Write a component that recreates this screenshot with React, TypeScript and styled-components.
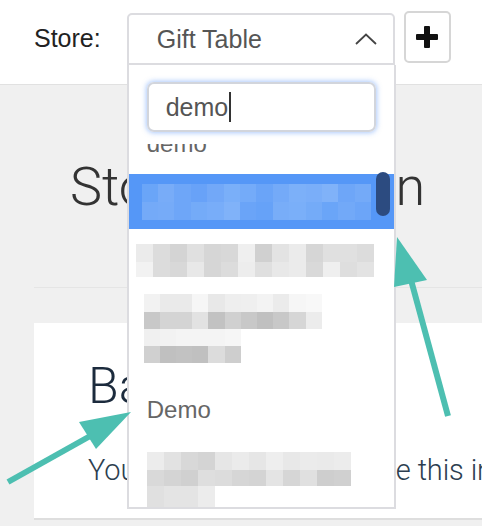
import React from "react";
import styled, { createGlobalStyle } from "styled-components";

const GlobalStyle = createGlobalStyle`
  body {
    margin: 0;
    font-family: "Liberation Sans", Arial, sans-serif;
  }
`;

const Page = styled.div`
  position: relative;
  width: 482px;
  height: 526px;
  overflow: hidden;
  background: #f0f0f0;
`;

const Header = styled.header`
  box-sizing: border-box;
  height: 85px;
  display: flex;
  align-items: flex-start;
  padding: 13px 0 0 34px;
  background: #fff;
  border-bottom: 1px solid #e1e1e1;
  position: relative;
  z-index: 2;
`;

const Label = styled.span`
  font-size: 25px;
  line-height: 50px;
  color: #222;
  margin-right: 26px;
`;

const SelectWrap = styled.div`
  position: relative;
  width: 268px;
  margin-right: 9px;
`;

const SelectBox = styled.div`
  box-sizing: border-box;
  height: 52px;
  display: flex;
  align-items: center;
  justify-content: space-between;
  padding: 0 16px 0 28px;
  border: 2px solid #dcdce0;
  border-radius: 5px 5px 0 0;
  font-size: 25px;
  color: #555;
`;

const AddButton = styled.button`
  box-sizing: border-box;
  margin-top: -2px;
  width: 47px;
  height: 52px;
  display: flex;
  align-items: center;
  justify-content: center;
  padding: 0;
  border: 2px solid #d6d6d6;
  border-radius: 5px;
  background: #fff;
`;

const Dropdown = styled.div`
  box-sizing: border-box;
  position: absolute;
  top: 52px;
  left: 0;
  width: 269px;
  height: 444px;
  display: flex;
  flex-direction: column;
  border: 2px solid #dcdce0;
  border-top: none;
  background: #fff;
`;

const SearchArea = styled.div`
  padding: 17px 18px 12px 18px;
`;

const SearchInput = styled.div`
  box-sizing: border-box;
  height: 50px;
  display: flex;
  align-items: center;
  padding-left: 17px;
  border: 2px solid #d2d5dc;
  border-radius: 7px;
  box-shadow: 0 0 5px 1px rgba(90, 150, 250, 0.5);
  font-size: 25px;
  color: #555;
`;

const Caret = styled.span`
  width: 2px;
  height: 30px;
  margin-left: 1px;
  background: #333;
`;

const Viewport = styled.div`
  flex: 1;
  overflow: hidden;
`;

const List = styled.div<{ $scroll: number }>`
  margin-top: -${({ $scroll }) => $scroll}px;
`;

const GroupLabel = styled.div<{ $pt: number; $pb: number }>`
  padding: ${({ $pt, $pb }) => `${$pt}px 0 ${$pb}px 18px`};
  font-size: 24px;
  line-height: 30px;
  color: #666;
`;

const Option = styled.div<{ $pt: number; $pb: number; $pl: number; $active?: boolean }>`
  padding: ${({ $pt, $pb, $pl }) => `${$pt}px 0 ${$pb}px ${$pl}px`};
  background: ${({ $active }) => ($active ? "#5597f7" : "transparent")};
`;

const ScrollThumb = styled.div`
  position: absolute;
  top: 107px;
  right: 4px;
  width: 14px;
  height: 44px;
  border-radius: 7px;
  background: #2c4b80;
`;

const MosaicRow = styled.div<{ $h: number }>`
  display: flex;
  height: ${({ $h }) => $h}px;
`;

const MosaicCell = styled.div<{ $w: number }>`
  width: ${({ $w }) => $w}px;
`;

const Main = styled.main`
  display: flex;
  flex-direction: column;
  padding-left: 34px;
`;

const TitleBand = styled.section`
  box-sizing: border-box;
  height: 203px;
  padding: 70px 0 0 36px;
  border-bottom: 1px solid #e5e5e5;
`;

const Title = styled.h1`
  margin: 0;
  font-family: Roboto, "Liberation Sans", sans-serif;
  font-weight: 300;
  font-size: 54px;
  line-height: 64px;
  color: #333;
  white-space: nowrap;
`;

const Card = styled.section`
  box-sizing: border-box;
  margin-top: 35px;
  height: 197px;
  padding: 33px 0 0 54px;
  background: #fff;
  border-bottom: 2px solid #dedede;
  white-space: nowrap;
`;

const CardTitle = styled.h2`
  margin: 0;
  font-family: Roboto, "Liberation Sans", sans-serif;
  font-weight: 300;
  font-size: 50px;
  line-height: 60px;
  color: #1c2b3d;
`;

const CardText = styled.p`
  margin: 34px 0 0;
  font-family: Roboto, "Liberation Sans", sans-serif;
  font-weight: 300;
  font-size: 29px;
  line-height: 40px;
  letter-spacing: -0.1px;
  color: #2c3e50;
`;

const Overlay = styled.svg`
  position: absolute;
  top: 0;
  left: 0;
  z-index: 5;
  pointer-events: none;
`;

type Row = { h: number; cells: string[] };

const grey = (s: string) => s.split(" ").map((c) => `#${c}${c}${c}`);
const blue = (s: string) => s.split(" ").map((c) => `#${c}`);

const Mosaic = ({ rows, cell }: { rows: Row[]; cell: number }) => (
  <div>
    {rows.map((row, i) => (
      <MosaicRow key={i} $h={row.h}>
        {row.cells.map((c, j) => (
          <MosaicCell key={j} $w={cell} style={{ background: c }} />
        ))}
      </MosaicRow>
    ))}
  </div>
);

const activeRows: Row[] = [
  { h: 18, cells: blue("6aa5f8 78acf8 6ea6f8 68a2f8 72a8f8 7aaff9 74abf9 6aa4f8 74aaf8 7cb0f9 7aaef9 80b2f9 6ea6f8 74aaf8") },
  { h: 18, cells: blue("74aaf8 76abf8 6ea6f8 74abf8 78adf9 80b2f9 6aa4f8 66a2f8 78adf8 7aaff9 74abf8 6aa5f8 72a9f8 6ca5f8") },
];

const secondRows: Row[] = [
  { h: 18, cells: grey("eb dc d4 e0 d6 d8 ef d0 e3 eb d6 e0 e0 dc") },
  { h: 15, cells: grey("f2 dc d8 e8 d6 dc ed df e8 eb d9 ef de e3") },
];

const thirdRows: Row[] = [
  { h: 18, cells: grey("f2 ea ea f6 e8 ee ef f3 eb f6 f8") },
  { h: 17, cells: grey("c8 d4 d4 e2 c2 d0 c8 c0 c8 d6 ec") },
  { h: 17, cells: grey("f0 f2 f4 f4 f4 f6") },
  { h: 17, cells: grey("d0 c0 c2 c0 dc ce") },
];

const fourthRows: Row[] = [
  { h: 18, cells: grey("ec e2 d8 d4 e6 eb e6 ee e8 eb ea ec") },
  { h: 16, cells: grey("d9 d4 d0 de dc d6 d4 e4 d6 e0 ce d0") },
  { h: 22, cells: grey("e0 e4 e4 ec") },
];

const Chevron = () => (
  <svg width="22" height="12" viewBox="0 0 22 12">
    <polyline points="1,11 11,1.5 21,11" fill="none" stroke="#444" strokeWidth="1.8" />
  </svg>
);

const Plus = () => (
  <svg width="24" height="24" viewBox="0 0 24 24">
    <rect x="9" y="1" width="6" height="22" rx="1" fill="#111" />
    <rect x="1" y="9" width="22" height="6" rx="1" fill="#111" />
  </svg>
);

const Arrows = () => (
  <Overlay width="482" height="526" viewBox="0 0 482 526">
    <g fill="#4dbfb1" stroke="#4dbfb1">
      <line x1="8" y1="482" x2="92" y2="435" strokeWidth="6" />
      <polygon points="131,412 79,422 96,449" strokeWidth="0" />
      <line x1="448" y1="416" x2="411" y2="280" strokeWidth="6" />
      <polygon points="397,237 394,287 427,280" strokeWidth="0" />
    </g>
  </Overlay>
);

export default function App() {
  return (
    <>
      <GlobalStyle />
      <Page>
        <Header>
          <Label>Store:</Label>
          <SelectWrap>
            <SelectBox>
              <span>Gift Table</span>
              <Chevron />
            </SelectBox>
            <Dropdown>
              <SearchArea>
                <SearchInput>
                  demo
                  <Caret />
                </SearchInput>
              </SearchArea>
              <Viewport>
                <List $scroll={15}>
                  <GroupLabel $pt={0} $pb={15}>demo</GroupLabel>
                  <Option $active $pt={10} $pb={9} $pl={13}>
                    <Mosaic rows={activeRows} cell={16.4} />
                  </Option>
                  <Option $pt={15} $pb={8} $pl={7}>
                    <Mosaic rows={secondRows} cell={17} />
                  </Option>
                  <Option $pt={9} $pb={15} $pl={15}>
                    <Mosaic rows={thirdRows} cell={16.2} />
                  </Option>
                  <GroupLabel $pt={17} $pb={27}>Demo</GroupLabel>
                  <Option $pt={0} $pb={0} $pl={18}>
                    <Mosaic rows={fourthRows} cell={17} />
                  </Option>
                </List>
              </Viewport>
              <ScrollThumb />
            </Dropdown>
          </SelectWrap>
          <AddButton aria-label="Add store">
            <Plus />
          </AddButton>
        </Header>
        <Main>
          <TitleBand>
            <Title>Store Selection</Title>
          </TitleBand>
          <Card>
            <CardTitle>Basic Info</CardTitle>
            <CardText>You will want to complete this information</CardText>
          </Card>
        </Main>
        <Arrows />
      </Page>
    </>
  );
}
